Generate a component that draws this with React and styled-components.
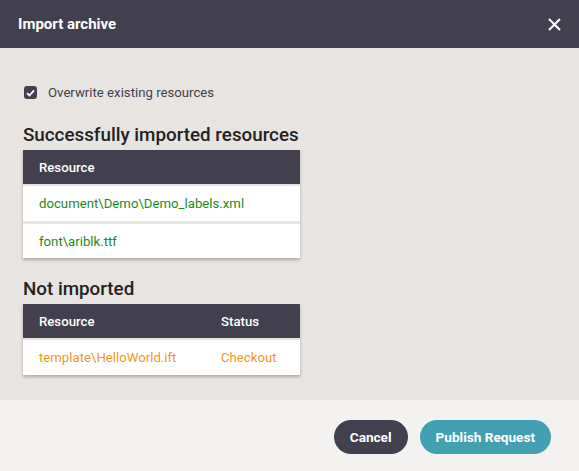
import React from 'react';
import styled, { createGlobalStyle } from 'styled-components';

const GlobalStyle = createGlobalStyle`
  html, body {
    margin: 0;
    padding: 0;
    background: #e8e4e1;
  }
  body {
    font-family: Roboto, "Noto Sans", sans-serif;
    -webkit-font-smoothing: antialiased;
  }
`;

const Dialog = styled.div`
  width: 579px;
  height: 471px;
  display: flex;
  flex-direction: column;
  background: #e8e4e1;
`;

const Header = styled.header`
  height: 48px;
  flex-shrink: 0;
  background: #423f4e;
  color: #ffffff;
  display: flex;
  align-items: center;
  justify-content: space-between;
  padding: 0 17px 0 18px;
  box-sizing: border-box;
`;

const Title = styled.h1`
  margin: 0;
  font-size: 15px;
  font-weight: 700;
`;

const CloseButton = styled.button`
  border: 0;
  background: none;
  padding: 0;
  width: 16px;
  height: 16px;
  display: flex;
  align-items: center;
  justify-content: center;
  cursor: pointer;
`;

const Body = styled.div`
  flex: 1;
  min-height: 0;
  padding: 37px 23px 0;
  box-sizing: border-box;
`;

const CheckRow = styled.label`
  display: flex;
  align-items: center;
  gap: 11px;
  height: 15px;
  font-size: 13.2px;
  color: #423f4e;
  margin-bottom: 24px;
  padding-left: 1px;
`;

const CheckBox = styled.span`
  width: 13px;
  height: 13px;
  border-radius: 3px;
  background: #423f4e;
  display: flex;
  align-items: center;
  justify-content: center;
`;

const SectionTitle = styled.h2`
  margin: 0 0 4px;
  font-size: 18.8px;
  font-weight: 500;
  color: #222222;
  line-height: 22px;
`;

const Table = styled.div`
  width: 277px;
  display: grid;
  grid-template-columns: ${(p) => p.$columns};
  row-gap: 2px;
  box-shadow: 0 2px 3px rgba(0, 0, 0, 0.25);
  margin-bottom: 20px;
`;

const HeadCell = styled.div`
  height: 34px;
  background: #423f4e;
  color: #ffffff;
  font-size: 13.2px;
  font-weight: 500;
  display: flex;
  align-items: center;
  padding-left: 16px;
`;

const Cell = styled.div`
  height: ${(p) => (p.$first ? '35px' : '34px')};
  background: #ffffff;
  color: ${(p) => p.$color};
  font-size: 13.2px;
  display: flex;
  align-items: center;
  padding-left: 16px;
  margin-top: ${(p) => (p.$first ? '0' : '1px')};
`;

const Footer = styled.footer`
  height: 71px;
  flex-shrink: 0;
  background: #f4f2f0;
  display: flex;
  align-items: center;
  justify-content: flex-end;
  gap: 12px;
  padding: 3px 28px 0 0;
  box-sizing: border-box;
`;

const Button = styled.button`
  height: 34px;
  border: 0;
  border-radius: 17px;
  padding: 0 16px;
  font-family: Roboto, sans-serif;
  font-size: 13.6px;
  font-weight: 700;
  color: #ffffff;
  background: ${(p) => (p.$primary ? '#42a0b2' : '#423f4e')};
  cursor: pointer;
`;

const GREEN = '#1f8a1f';
const ORANGE = '#f7941d';

const imported = ['document\\Demo\\Demo_labels.xml', 'font\\ariblk.ttf'];
const notImported = [{ name: 'template\\HelloWorld.ift', status: 'Checkout' }];

const App = () => {
  return (
    <>
      <GlobalStyle />
      <Dialog>
        <Header>
          <Title>Import archive</Title>
          <CloseButton aria-label='Close'>
            <svg width='13' height='13' viewBox='0 0 13 13'>
              <path d='M1 1L12 12M12 1L1 12' stroke='#ffffff' strokeWidth='2' />
            </svg>
          </CloseButton>
        </Header>
        <Body>
          <CheckRow>
            <CheckBox>
              <svg width='9' height='8' viewBox='0 0 9 8'>
                <path d='M1 4.2L3.4 6.5L8 1.3' stroke='#ffffff' strokeWidth='1.8' fill='none' />
              </svg>
            </CheckBox>
            Overwrite existing resources
          </CheckRow>

          <SectionTitle>Successfully imported resources</SectionTitle>
          <Table $columns='1fr'>
            <HeadCell>Resource</HeadCell>
            {imported.map((item, index) => (
              <Cell key={index} $color={GREEN} $first={index === 0}>
                {item}
              </Cell>
            ))}
          </Table>

          <SectionTitle>Not imported</SectionTitle>
          <Table $columns='182px 1fr'>
            <HeadCell>Resource</HeadCell>
            <HeadCell>Status</HeadCell>
            {notImported.map((item, index) => (
              <React.Fragment key={index}>
                <Cell $color={ORANGE} $first>
                  {item.name}
                </Cell>
                <Cell $color={ORANGE} $first>
                  {item.status}
                </Cell>
              </React.Fragment>
            ))}
          </Table>
        </Body>
        <Footer>
          <Button>Cancel</Button>
          <Button $primary>Publish Request</Button>
        </Footer>
      </Dialog>
    </>
  );
};

export default App;
